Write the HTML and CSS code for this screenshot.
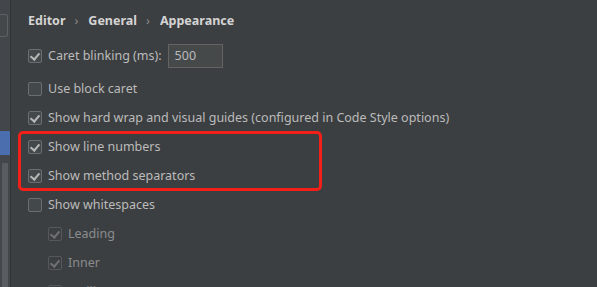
FILE: index.html
```html
<!DOCTYPE html>
<html>
<head>
<meta charset="utf-8">
<link rel="stylesheet" href="styles.css">
</head>
<body>
<div class="app">
  <aside class="sidebar">
    <div class="search"></div>
    <div class="selected"></div>
    <div class="scroll"></div>
  </aside>
  <div class="divider"></div>
  <main class="main">
    <nav class="crumbs">
      <span>Editor</span><span class="sep">›</span><span>General</span><span class="sep">›</span><span>Appearance</span>
    </nav>
    <div class="row first">
      <span class="cb on"></span><span class="label">Caret blinking (ms):</span>
      <span class="field">500</span>
    </div>
    <div class="row"><span class="cb"></span><span class="label">Use block caret</span></div>
    <div class="row"><span class="cb on"></span><span class="label">Show hard wrap and visual guides (configured in Code Style options)</span></div>
    <div class="highlight">
      <div class="row"><span class="cb on"></span><span class="label">Show line numbers</span></div>
      <div class="row"><span class="cb on"></span><span class="label">Show method separators</span></div>
    </div>
    <div class="row"><span class="cb"></span><span class="label">Show whitespaces</span></div>
    <div class="row sub"><span class="cb on dis"></span><span class="label">Leading</span></div>
    <div class="row sub"><span class="cb on dis"></span><span class="label">Inner</span></div>
    <div class="row sub"><span class="cb on dis"></span><span class="label">Trailing</span></div>
  </main>
</div>
</body>
</html>
```
FILE: styles.css
```css
html, body {
  margin: 0;
  padding: 0;
  height: 100%;
  overflow: hidden;
  background: #3c3f41;
}
.app {
  display: flex;
  height: 287px;
  overflow: hidden;
  font-family: "Noto Sans", "Open Sans", sans-serif;
  font-size: 12.5px;
  color: #bbbbbb;
}
.sidebar {
  width: 10px;
  background: #43464a;
  display: flex;
  flex-direction: column;
  flex-shrink: 0;
}
.search {
  margin-top: 14px;
  height: 21px;
  width: 7px;
  border: 1px solid #5e6164;
  border-left: none;
  border-radius: 0 3px 3px 0;
  background: #45484b;
}
.selected {
  margin-top: 94px;
  height: 24px;
  background: #4b6eaf;
}
.scroll {
  margin: 8px 2px 0 2px;
  flex: 1;
  background: #595c61;
}
.divider {
  width: 1px;
  background: #303234;
  flex-shrink: 0;
}
.main {
  flex: 1;
  padding-left: 17px;
  background: #3c3f41;
}
.crumbs {
  height: 41px;
  display: flex;
  align-items: center;
  font-weight: bold;
  color: #d4d4d4;
  padding-bottom: 1px;
  box-sizing: border-box;
}
.crumbs .sep {
  font-weight: normal;
  color: #8c8c8c;
  margin: 0 10px 0 9px;
}
.row {
  height: 29px;
  flex-shrink: 0;
  display: flex;
  align-items: center;
  white-space: nowrap;
}
.row.first {
  margin-bottom: 4px;
}
.cb {
  width: 12px;
  height: 12px;
  border: 1px solid #6b6e70;
  border-radius: 2px;
  background: #43494a;
  position: relative;
  flex-shrink: 0;
}
.cb.on::after {
  content: "";
  position: absolute;
  left: 3px;
  top: 1px;
  width: 4px;
  height: 7px;
  border: solid #b8b8b8;
  border-width: 0 2px 2px 0;
  transform: rotate(40deg);
}
.cb.dis {
  border-color: #55585a;
  background: #3c3f41;
}
.cb.dis::after {
  border-color: #6e7072;
}
.label {
  margin-left: 6px;
}
.sub {
  padding-left: 20px;
}
.sub .label {
  color: #8a8c8e;
}
.field {
  margin-left: 6px;
  width: 47px;
  height: 22px;
  border: 1px solid #646464;
  background: #45494a;
  display: flex;
  align-items: center;
  padding-left: 6px;
  color: #bbbbbb;
}
.highlight {
  margin-left: -10px;
  width: 291px;
  padding-left: 7px;
  height: 54px;
  border: 3px solid #f3201a;
  border-radius: 5px;
  margin-top: -1px;
  margin-bottom: -1px;
  display: flex;
  flex-direction: column;
}
.highlight .row:first-child {
  margin-top: -2px;
}
```
